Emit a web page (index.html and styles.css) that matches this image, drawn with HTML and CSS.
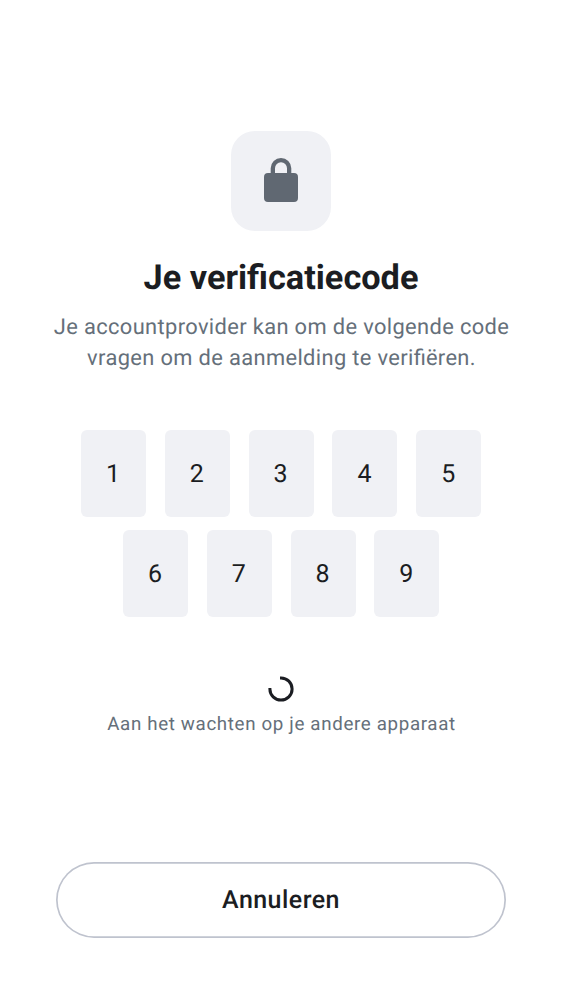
FILE: index.html
```html
<!DOCTYPE html>
<html lang="nl">
<head>
<meta charset="utf-8">
<title>Je verificatiecode</title>
<link rel="stylesheet" href="styles.css">
</head>
<body>
<main class="screen">
  <div class="badge">
    <svg class="lock" viewBox="0 0 34 44" width="34" height="44"><path fill="currentColor" fill-rule="evenodd" d="M6.700 15V10.300a10.300 10.300 0 0 1 20.600 0V15H30a4 4 0 0 1 4 4V40a4 4 0 0 1-4 4H4a4 4 0 0 1-4-4V19a4 4 0 0 1 4-4zM11 15H23V10.300a6 6 0 0 0-12 0z"/></svg>
  </div>
  <h1 class="title">Je verificatiecode</h1>
  <p class="description">Je accountprovider kan om de volgende code<br>vragen om de aanmelding te veri<span class="ligature">fi</span>ëren.</p>
  <div class="code">
    <div class="row"><span class="digit">1</span><span class="digit">2</span><span class="digit">3</span><span class="digit">4</span><span class="digit">5</span></div>
    <div class="row"><span class="digit">6</span><span class="digit">7</span><span class="digit">8</span><span class="digit">9</span></div>
  </div>
  <svg class="spinner" viewBox="0 0 26 26" width="26" height="26"><path fill="none" stroke="currentColor" stroke-width="3" stroke-linecap="butt" d="M12 1.900H13A11.100 11.100 0 1 1 1.900 13V12"/></svg>
  <p class="status">Aan het wachten op je andere apparaat</p>
  <button class="cancel" type="button">Annuleren</button>
</main>
</body>
</html>
```

FILE: styles.css
```css
* { box-sizing: border-box; }
body { margin: 0; background: #fff; color: #1b1d22; font-family: Roboto, sans-serif; text-rendering: geometricPrecision; }
.screen { height: 1000px; padding: 131px 56px 62px; display: flex; flex-direction: column; align-items: center; }
.badge { width: 100px; height: 100px; border-radius: 24px; background: #f0f1f5; color: #606872; display: flex; align-items: center; justify-content: center; padding-bottom: 2px; }
.lock { display: block; }
.title { margin: 26px 0 0; font-size: 34.300px; line-height: 42px; font-weight: 700; white-space: nowrap; }
.description { margin: 13px 0 0; padding-left: 1px; font-size: 21.860px; line-height: 31px; letter-spacing: .36px; color: #656f7a; text-align: center; white-space: nowrap; }
.ligature { letter-spacing: 0; }
.code { margin-top: 56px; display: flex; flex-direction: column; align-items: center; gap: 13px; }
.row { display: flex; gap: 18.800px; padding-left: .3px; }
.digit { width: 65px; height: 87px; border-radius: 6px; background: #f0f1f5; display: flex; align-items: center; justify-content: center; padding: 2px 1px 0 0; font-size: 25px; }
.spinner { display: block; margin-top: 59px; }
.status { margin: 10px 0 0; padding-left: 1px; font-size: 18.730px; line-height: 25px; letter-spacing: .66px; color: #656f7a; white-space: nowrap; }
.cancel { margin-top: auto; width: 450px; height: 76px; border: 0; border-radius: 38px; box-shadow: inset 0 0 0 1.700px #bfc3ce; background: #fff; color: #1b1d22; font: 500 25px Roboto, sans-serif; letter-spacing: .45px; padding: 1px 0 0; text-rendering: geometricPrecision; }
```
